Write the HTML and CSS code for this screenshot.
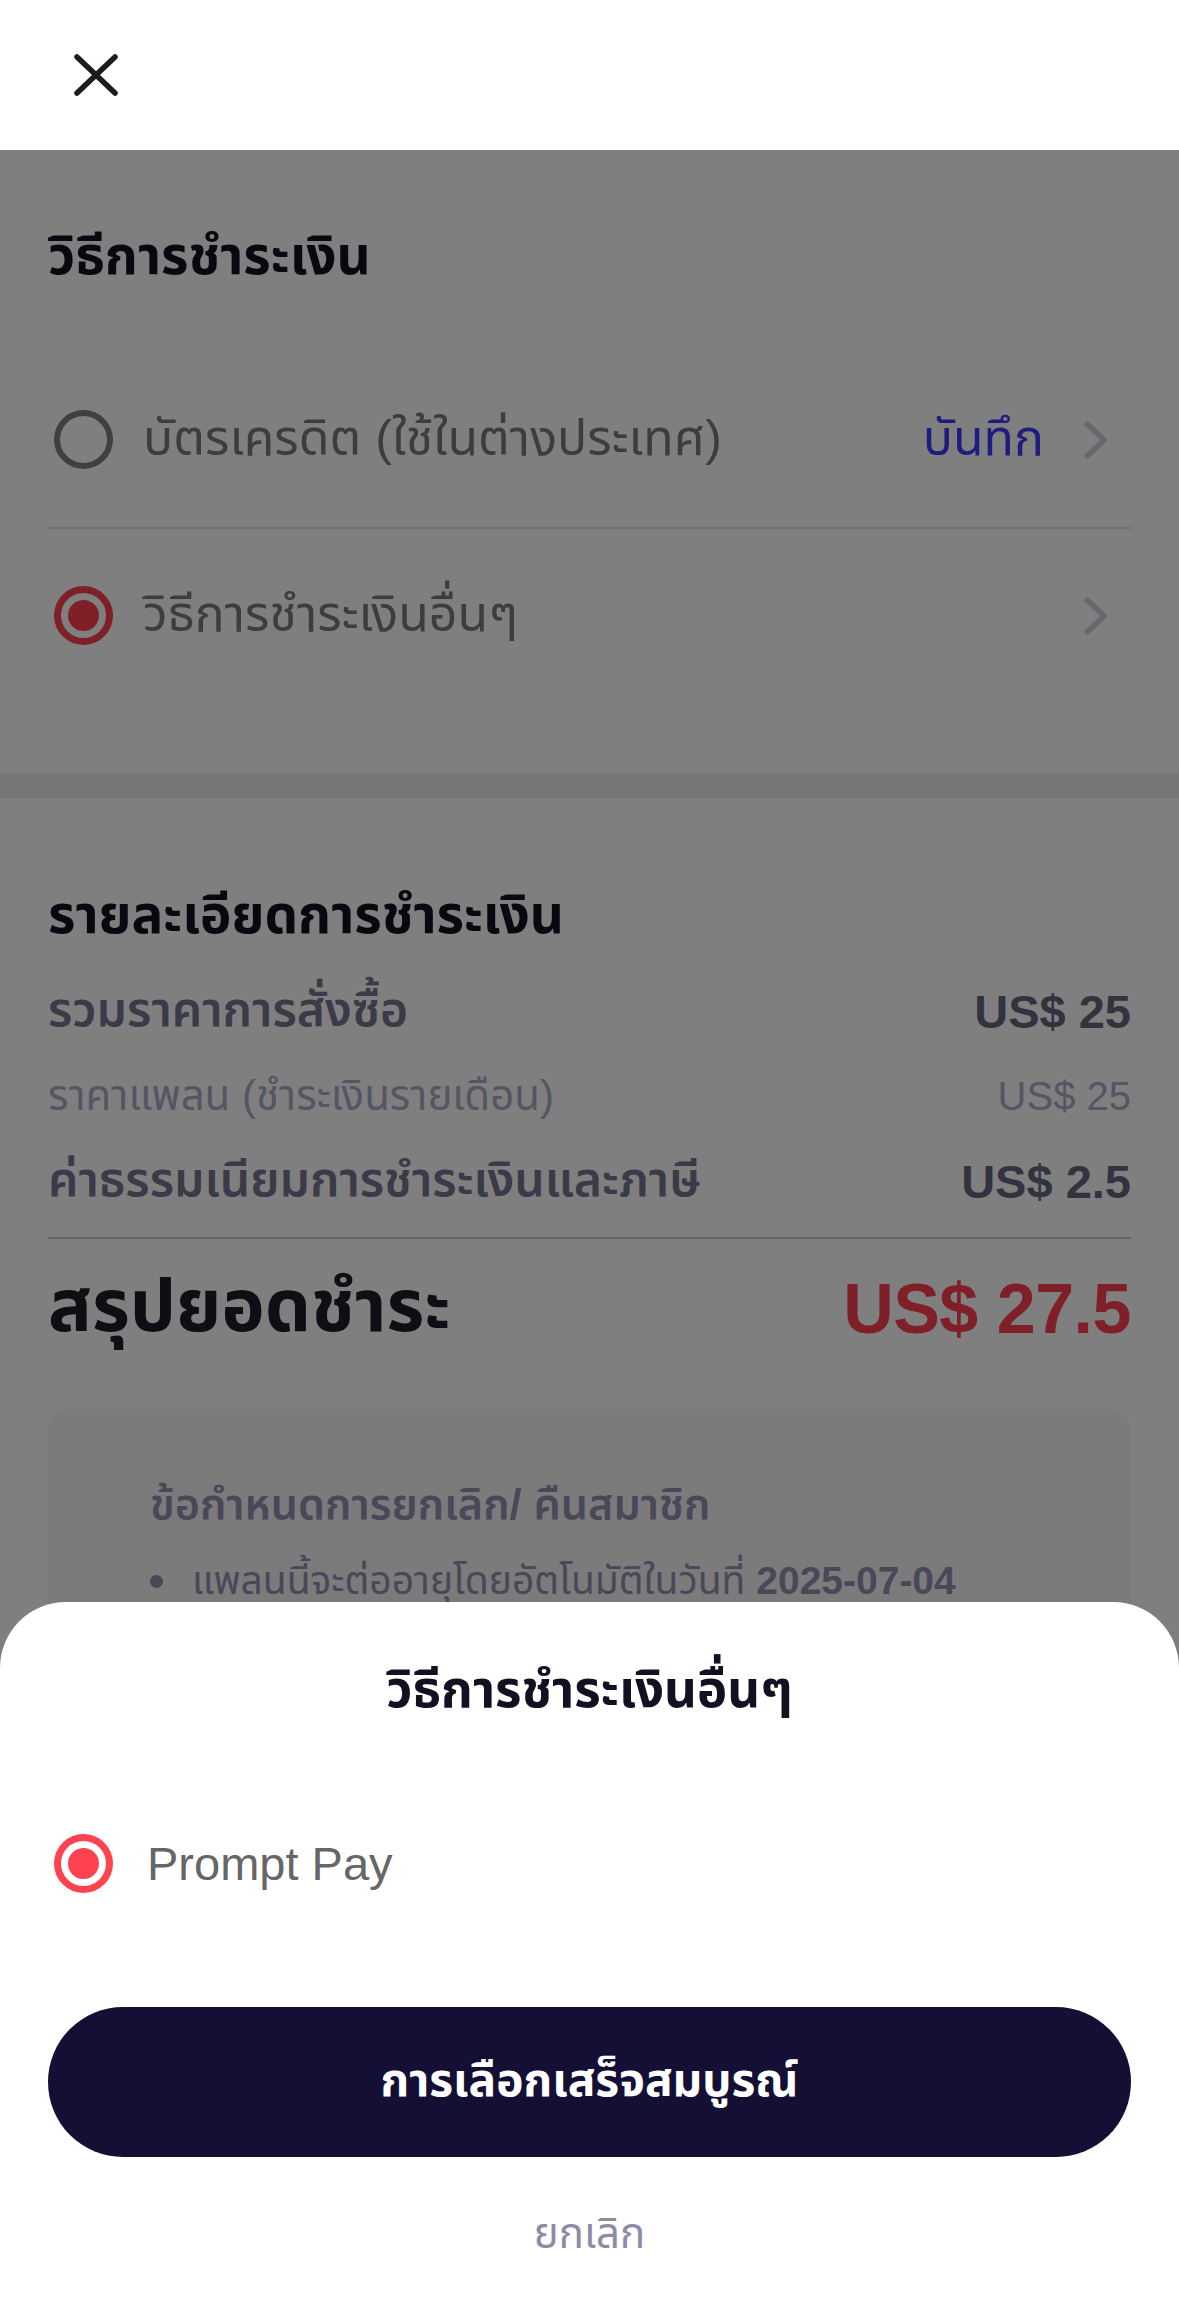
FILE: index.html
```html
<!DOCTYPE html>
<html lang="th">
<head>
<meta charset="utf-8">
<title>วิธีการชำระเงิน</title>
<link rel="stylesheet" href="styles.css">
</head>
<body>
<div class="screen">
  <header class="topbar">
    <button class="close" aria-label="ปิด">
      <svg width="46" height="44" viewBox="0 0 46 44"><path d="M4 4 L42 40 M42 4 L4 40" stroke="#1c1c1c" stroke-width="5.5" stroke-linecap="round" fill="none"/></svg>
    </button>
  </header>

  <main class="content">
    <section class="methods">
      <h2 class="sec-title">วิธีการชำระเงิน</h2>
      <div class="method">
        <span class="radio"></span>
        <span class="method-label">บัตรเครดิต (ใช้ในต่างประเทศ)</span>
        <span class="save">บันทึก</span>
        <svg class="chev" width="46" height="42" viewBox="0 0 46 42"><path d="M5 5 L22 21 L5 37" stroke="#cfcfdc" stroke-width="5.5" stroke-linecap="round" stroke-linejoin="round" fill="none"/></svg>
      </div>
      <div class="method">
        <span class="radio on"></span>
        <span class="method-label">วิธีการชำระเงินอื่นๆ</span>
        <svg class="chev" width="46" height="42" viewBox="0 0 46 42"><path d="M5 5 L22 21 L5 37" stroke="#cfcfdc" stroke-width="5.5" stroke-linecap="round" stroke-linejoin="round" fill="none"/></svg>
      </div>
    </section>

    <div class="band"></div>

    <section class="details">
      <h2 class="sec-title">รายละเอียดการชำระเงิน</h2>
      <div class="line main"><span>รวมราคาการสั่งซื้อ</span><span class="amt">US$ 25</span></div>
      <div class="line sub"><span>ราคาแพลน (ชำระเงินรายเดือน)</span><span>US$ 25</span></div>
      <div class="line main"><span>ค่าธรรมเนียมการชำระเงินและภาษี</span><span class="amt">US$ 2.5</span></div>
      <div class="total"><span class="total-label">สรุปยอดชำระ</span><span class="total-amt">US$ 27.5</span></div>
      <div class="notice">
        <p class="notice-title">ข้อกำหนดการยกเลิก/ คืนสมาชิก</p>
        <ul class="notice-list">
          <li>แพลนนี้จะต่ออายุโดยอัตโนมัติในวันที่ <b>2025-07-04</b></li>
          <li>สามารถยกเลิกการต่ออายุได้ทุกเมื่อ</li>
        </ul>
      </div>
    </section>
  </main>

  <div class="overlay"></div>

  <div class="sheet">
    <h3 class="sheet-title">วิธีการชำระเงินอื่นๆ</h3>
    <div class="option">
      <span class="radio on bright"></span>
      <span class="option-label">Prompt Pay</span>
    </div>
    <button class="confirm">การเลือกเสร็จสมบูรณ์</button>
    <button class="cancel">ยกเลิก</button>
  </div>
</div>
</body>
</html>
```

FILE: styles.css
```css
* { box-sizing: border-box; }
html, body { margin: 0; padding: 0; }
body {
  width: 1179px;
  height: 2314px;
  overflow: hidden;
  background: #fff;
  font-family: "Liberation Sans", "Noto Sans Thai", "Noto Sans", sans-serif;
}
.screen {
  position: relative;
  width: 1179px;
  height: 2314px;
  overflow: hidden;
  background: #fff;
}
.topbar {
  height: 150px;
  background: #fff;
  padding: 53px 0 0 73px;
}
.close {
  display: block;
  border: 0;
  padding: 0;
  background: none;
  width: 46px;
  height: 44px;
}
.close svg { display: block; }

.content { background: #fff; }

.methods { padding: 74px 48px 72px; }
.sec-title {
  margin: 0;
  font-size: 53px;
  line-height: 64px;
  font-weight: 700;
  color: #111122;
}
.methods .sec-title { margin-bottom: 64px; }
.method {
  display: flex;
  align-items: center;
  height: 175px;
}
.method + .method { border-top: 2px solid #dcdce8; }
.radio {
  flex: none;
  width: 59px;
  height: 59px;
  border-radius: 50%;
  border: 6px solid #808080;
  margin-left: 6px;
  display: flex;
  align-items: center;
  justify-content: center;
}
.radio.on { border: 7px solid #ff4050; }
.radio.on::after {
  content: "";
  width: 31px;
  height: 31px;
  border-radius: 50%;
  background: #ff4050;
}
.radio.bright { border-color: #ff424f; }
.radio.bright::after { background: #ff424f; }
.method-label {
  flex: 1;
  margin-left: 30px;
  font-size: 50px;
  color: #7a7a7a;
}
.save {
  font-size: 50px;
  color: #3c38ff;
  margin-right: 38px;
}
.chev { display: block; flex: none; margin-right: 3px; }

.band { height: 24px; background: #ededed; }

.details { padding: 85px 48px 0; }
.details .sec-title { margin-bottom: 22px; }
.line {
  display: flex;
  justify-content: space-between;
  align-items: center;
  height: 85px;
}
.line.main { font-size: 48px; font-weight: 600; color: #747490; }
.line.main .amt { font-size: 47px; font-weight: 700; color: #66667e; }
.line.sub { font-size: 42px; color: #ababc6; }
.line.sub span:last-child { font-size: 40px; }
.total {
  margin-top: 13px;
  border-top: 2px solid #c8c8d4;
  height: 142px;
  display: flex;
  justify-content: space-between;
  align-items: center;
}
.total-label { font-size: 73px; font-weight: 700; color: #1c1c28; }
.total-amt { font-size: 70px; font-weight: 700; color: #ff4050; letter-spacing: -0.5px; }
.notice {
  margin-top: 30px;
  background: #f6f6f8;
  border-radius: 22px;
  padding: 69px 48px 60px 102px;
  color: #9090b0;
}
.notice-title {
  margin: 0;
  font-size: 43px;
  line-height: 52px;
  font-weight: 600;
}
.notice-list {
  list-style: none;
  margin: 26px 0 0;
  padding: 0;
  font-size: 39px;
  line-height: 50px;
}
.notice-list li {
  display: flex;
  align-items: center;
}
.notice-list li::before {
  content: "";
  flex: none;
  width: 13px;
  height: 13px;
  border-radius: 50%;
  background: #9090b0;
  margin: 0 29px 0 0;
}
.notice-list b { margin-left: 0.28em; }

.overlay {
  position: absolute;
  left: 0;
  right: 0;
  top: 150px;
  bottom: 0;
  background: rgba(0, 0, 0, 0.5);
}

.sheet {
  position: absolute;
  left: 0;
  right: 0;
  top: 1602px;
  bottom: 0;
  background: #fff;
  border-radius: 66px 66px 0 0;
  padding: 58px 48px 0;
  display: flex;
  flex-direction: column;
}
.sheet-title {
  margin: 0;
  text-align: center;
  font-size: 51px;
  line-height: 60px;
  font-weight: 700;
  color: #111122;
}
.option {
  display: flex;
  align-items: center;
  height: 100px;
  margin-top: 93px;
}
.option-label {
  margin-left: 34px;
  font-size: 47px;
  color: #666;
}
.confirm {
  margin-top: 94px;
  height: 150px;
  border: 0;
  border-radius: 75px;
  background: #140f35;
  color: #fff;
  font-family: inherit;
  font-size: 46px;
  font-weight: 700;
}
.cancel {
  margin-top: 45px;
  height: 60px;
  border: 0;
  background: none;
  font-family: inherit;
  font-size: 42px;
  color: #8c8ca5;
}
```
